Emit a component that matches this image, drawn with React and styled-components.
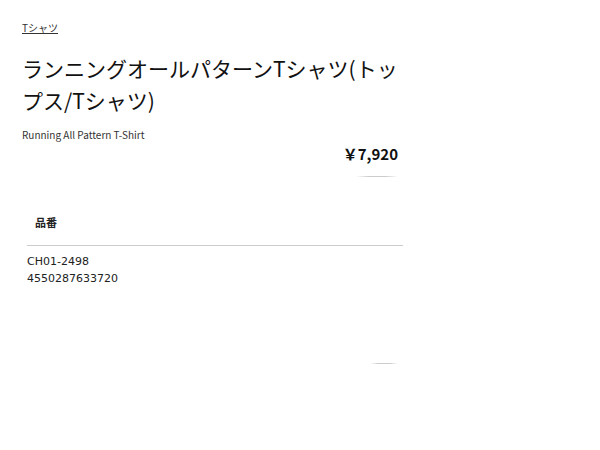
import React from 'react';
import styled, { createGlobalStyle } from 'styled-components';

const GlobalStyle = createGlobalStyle`
  body {
    margin: 0;
    background: #fff;
    font-family: "Noto Sans CJK JP", "Noto Sans", sans-serif;
    color: #222;
  }
`;

const Page = styled.div`
  width: 381px;
  padding: 20px 0 0 22px;
`;

const Crumb = styled.a`
  display: block;
  font-size: 10px;
  color: #333;
  text-decoration: underline;
  line-height: 16px;
`;

const Title = styled.h1`
  margin: 16px 0 0;
  font-size: 21px;
  font-weight: 400;
  line-height: 32px;
  color: #111;
  word-break: break-all;
`;

const EnName = styled.p`
  margin: 11px 0 0;
  font-size: 10px;
  line-height: 16px;
  color: #333;
`;

const PriceBox = styled.div`
  display: flex;
  flex-direction: column;
  align-items: flex-end;
  padding-right: 5px;
`;

const Price = styled.div`
  font-size: 15px;
  font-weight: 700;
  line-height: 22px;
  color: #111;
`;

const Fade = styled.div`
  width: ${(p) => p.w}px;
  height: 1px;
  margin-top: ${(p) => p.top}px;
  background: linear-gradient(to right, rgba(0,0,0,0), #ccc 30%, #ccc 70%, rgba(0,0,0,0));
`;

const Spec = styled.div`
  margin-top: 37px;
  padding-left: 5px;
`;

const SpecHead = styled.div`
  font-size: 11px;
  font-weight: 700;
  padding: 0 0 15px 8px;
  line-height: 16px;
  border-bottom: 1px solid #ccc;
`;

const SpecBody = styled.div`
  padding-top: 7px;
  font-family: "DejaVu Sans", "Noto Sans CJK JP", sans-serif;
  font-size: 11px;
  line-height: 17px;
  color: #222;
`;

export default function App() {
  return (
    <>
      <GlobalStyle />
      <Page>
        <Crumb href="#">Tシャツ</Crumb>
        <Title>ランニングオールパターンTシャツ(トップス/Tシャツ)</Title>
        <EnName>Running All Pattern T-Shirt</EnName>
        <PriceBox>
          <Price>￥7,920</Price>
          <Fade w={42} top={11} />
        </PriceBox>
        <Spec>
          <SpecHead>品番</SpecHead>
          <SpecBody>
            <div>CH01-2498</div>
            <div>4550287633720</div>
          </SpecBody>
        </Spec>
        <PriceBox>
          <Fade w={28} top={76} />
        </PriceBox>
      </Page>
    </>
  );
}
